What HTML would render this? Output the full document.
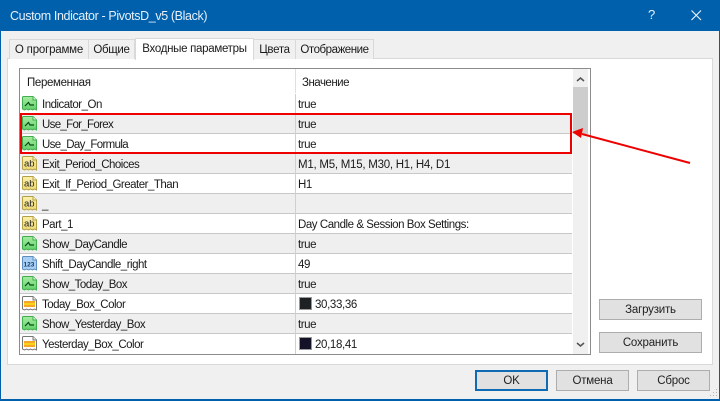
<!DOCTYPE html>
<html><head><meta charset="utf-8">
<style>
html,body{margin:0;padding:0;background:#f0f0f0}
#w{position:relative;width:720px;height:401px;overflow:hidden;background:#f0f0f0;font-family:"Liberation Sans","Noto Sans CJK SC",sans-serif;font-size:11.5px;color:#1a1a1a}
#w div{position:absolute;white-space:nowrap;box-sizing:border-box}
.tab{top:39px;height:20px;background:#f0f0f0;border:1px solid #d9d9d9;border-bottom:none;line-height:21px;text-align:center;letter-spacing:-.3px}
.row{left:20px;width:552px;height:20px;border-bottom:1px solid #c8c8c8}
.n{left:22px;top:1px;line-height:20px;letter-spacing:-.5px}
.v{left:278px;top:1px;line-height:20px;letter-spacing:-.45px}
.sep{left:275px;top:0;width:1px;height:20px;background:#d0d0d0}
.btn{background:#e1e1e1;border:1px solid #adadad;text-align:center;line-height:21px;color:#222;letter-spacing:-.2px}
svg{position:absolute;left:1px;top:1px}
.sw{left:279px;top:3px;width:13px;height:13px;border:1px solid #999}
</style></head><body>
<div id="w">
<svg width="0" height="0" style="position:absolute"><defs>
<linearGradient id="gg" x1="0" y1="0" x2="0" y2="1"><stop offset="0" stop-color="#a8eca0"/><stop offset="1" stop-color="#62d06a"/></linearGradient>
<linearGradient id="yg" x1="0" y1="0" x2="0" y2="1"><stop offset="0" stop-color="#fbf2b0"/><stop offset="1" stop-color="#eed873"/></linearGradient>
<g id="g"><path d="M1.5 2.5Q1.5 1.5 2.5 1.5H12L15.5 5V15l-2-1-2 1-2-1-2 1-2-1-2 1-2-1z" fill="url(#gg)" stroke="#3fae4f"/><path d="M12 1.5V5H15.5" fill="#d8f7d4" stroke="#3fae4f"/><path d="M4 11L7.5 7.5L9 10H13" fill="none" stroke="#0b4a1b" stroke-width="1.2"/></g>
<g id="y"><path d="M1.5 2.5Q1.5 1.5 2.5 1.5H12L15.5 5V15l-2-1-2 1-2-1-2 1-2-1-2 1-2-1z" fill="url(#yg)" stroke="#b3a044"/><path d="M12 1.5V5H15.5" fill="#fff8d0" stroke="#b3a044"/><text x="3" y="11.5" font-size="9.5" font-family="Liberation Sans" fill="#222">ab</text></g>
<g id="b"><path d="M1.5 2.5Q1.5 1.5 2.5 1.5H12L15.5 5V15l-2-1-2 1-2-1-2 1-2-1-2 1-2-1z" fill="#a9d0f2" stroke="#5c8fc0"/><path d="M12 1.5V5H15.5" fill="#e0f0ff" stroke="#5c8fc0"/><text x="2.5" y="11.5" font-size="6.5" font-family="Liberation Sans" font-weight="bold" fill="#123a70">123</text></g>
<g id="c"><path d="M1.5 2.5Q1.5 1.5 2.5 1.5H12L15.5 5V15l-2-1-2 1-2-1-2 1-2-1-2 1-2-1z" fill="#fff" stroke="#777"/><path d="M12 1.5V5H15.5" fill="#eee" stroke="#777"/><rect x="3" y="6" width="11" height="6" fill="#f5a623"/><rect x="3" y="8" width="11" height="2" fill="#f7d31e"/></g>
</defs></svg>

<!-- title bar and window border -->
<div style="left:0;top:0;width:720px;height:31px;background:#0060ac"></div>
<div style="left:0;top:31px;width:1px;height:369px;background:#0060ac"></div>
<div style="left:719px;top:31px;width:1px;height:369px;background:#0060ac"></div>
<div style="left:0;top:399px;width:720px;height:2px;background:#0060ac"></div>
<div style="left:10px;top:7px;line-height:19px;font-size:12.5px;letter-spacing:-.38px;color:#e6f0fa">Custom Indicator - PivotsD_v5 (Black)</div>
<div style="left:648px;top:6px;line-height:18px;font-size:13px;color:#e6f0fa">?</div>
<svg style="left:691px;top:10px" width="11" height="11"><path d="M.5 .5L10 10M10 .5L.5 10" stroke="#e6f0fa" stroke-width="1.2" fill="none"/></svg>

<!-- panel -->
<div style="left:7px;top:58px;width:706px;height:307px;background:#fff;border:1px solid #d9d9d9"></div>

<!-- tabs -->
<div class="tab" style="left:9px;width:80px;letter-spacing:-.2px">О программе</div>
<div class="tab" style="left:88px;width:47px">Общие</div>
<div class="tab" style="left:253px;width:43px">Цвета</div>
<div class="tab" style="left:295px;width:79px;letter-spacing:-.45px">Отображение</div>
<div class="tab" style="left:135px;top:38px;width:119px;height:22px;background:#fff;line-height:20px">Входные параметры</div>

<!-- list -->
<div style="left:19px;top:68px;width:572px;height:287px;border:1px solid #8c8c8c;background:#fff;overflow:hidden">
  <div style="left:7px;top:6px;line-height:16px;letter-spacing:-.35px">Переменная</div>
  <div style="left:275px;top:0;width:1px;height:24px;background:#e0e0e0"></div>
  <div style="left:282px;top:6px;line-height:16px;letter-spacing:-.5px">Значение</div>

  <div class="row" style="left:0;top:25px"><svg width="17" height="17"><use href="#g"/></svg><div class="n">Indicator_On</div><div class="sep"></div><div class="v">true</div></div>
  <div class="row" style="left:0;top:45px;background:#efefef"><svg width="17" height="17"><use href="#g"/></svg><div class="n" style="letter-spacing:-.68px">Use_For_Forex</div><div class="sep"></div><div class="v">true</div></div>
  <div class="row" style="left:0;top:65px"><svg width="17" height="17"><use href="#g"/></svg><div class="n" style="letter-spacing:-.66px">Use_Day_Formula</div><div class="sep"></div><div class="v">true</div></div>
  <div class="row" style="left:0;top:85px;background:#efefef"><svg width="17" height="17"><use href="#y"/></svg><div class="n">Exit_Period_Choices</div><div class="sep"></div><div class="v" style="letter-spacing:-.25px">M1, M5, M15, M30, H1, H4, D1</div></div>
  <div class="row" style="left:0;top:105px"><svg width="17" height="17"><use href="#y"/></svg><div class="n">Exit_If_Period_Greater_Than</div><div class="sep"></div><div class="v">H1</div></div>
  <div class="row" style="left:0;top:125px;background:#efefef"><svg width="17" height="17"><use href="#y"/></svg><div class="n">_</div><div class="sep"></div></div>
  <div class="row" style="left:0;top:145px"><svg width="17" height="17"><use href="#y"/></svg><div class="n">Part_1</div><div class="sep"></div><div class="v">Day Candle &amp; Session Box Settings:</div></div>
  <div class="row" style="left:0;top:165px;background:#efefef"><svg width="17" height="17"><use href="#g"/></svg><div class="n">Show_DayCandle</div><div class="sep"></div><div class="v">true</div></div>
  <div class="row" style="left:0;top:185px"><svg width="17" height="17"><use href="#b"/></svg><div class="n">Shift_DayCandle_right</div><div class="sep"></div><div class="v">49</div></div>
  <div class="row" style="left:0;top:205px;background:#efefef"><svg width="17" height="17"><use href="#g"/></svg><div class="n">Show_Today_Box</div><div class="sep"></div><div class="v">true</div></div>
  <div class="row" style="left:0;top:225px"><svg width="17" height="17"><use href="#c"/></svg><div class="n">Today_Box_Color</div><div class="sep"></div><div class="sw" style="background:#1e2124"></div><div class="v" style="left:295px;letter-spacing:-.35px">30,33,36</div></div>
  <div class="row" style="left:0;top:245px;background:#efefef"><svg width="17" height="17"><use href="#g"/></svg><div class="n">Show_Yesterday_Box</div><div class="sep"></div><div class="v">true</div></div>
  <div class="row" style="left:0;top:265px;border:none"><svg width="17" height="17"><use href="#c"/></svg><div class="n">Yesterday_Box_Color</div><div class="sep"></div><div class="sw" style="background:#141229"></div><div class="v" style="left:295px;letter-spacing:-.35px">20,18,41</div></div>

  <!-- scrollbar -->
  <div style="left:553px;top:0;width:15px;height:285px;background:#f0f0f0"></div>
  <div style="left:553px;top:18px;width:15px;height:47px;background:#cdcdcd"></div>
  <svg style="left:556px;top:7px" width="9" height="7"><path d="M1 5L4.5 2L8 5" stroke="#555" stroke-width="1.6" fill="none"/></svg>
  <svg style="left:556px;top:272px" width="9" height="7"><path d="M1 2L4.5 5L8 2" stroke="#555" stroke-width="1.6" fill="none"/></svg>
</div>

<!-- red highlight and arrow -->
<div style="left:20px;top:113px;width:552px;height:41px;border:2px solid #ee0000"></div>
<svg style="left:570px;top:125px" width="125" height="45"><path d="M120 38L12 9" stroke="#ee0000" stroke-width="2" fill="none"/><path d="M2 7L13 3L11 13z" fill="#ee0000"/></svg>

<!-- side buttons -->
<div class="btn" style="left:599px;top:299px;width:103px;height:21px">Загрузить</div>
<div class="btn" style="left:599px;top:332px;width:103px;height:21px">Сохранить</div>

<!-- bottom buttons -->
<div class="btn" style="left:475px;top:370px;width:73px;height:21px;border:2px solid #0f6cb4;line-height:19px">OK</div>
<div class="btn" style="left:556px;top:370px;width:73px;height:21px">Отмена</div>
<div class="btn" style="left:637px;top:370px;width:73px;height:21px">Сброс</div>

<!-- grip -->
<svg style="left:708px;top:388px" width="10" height="10"><path d="M8 1h1v1H8zM5 4h1v1H5zM8 4h1v1H8zM2 7h1v1H2zM5 7h1v1H5zM8 7h1v1H8z" fill="#b5b5b5"/></svg>
</div>
</body></html>
